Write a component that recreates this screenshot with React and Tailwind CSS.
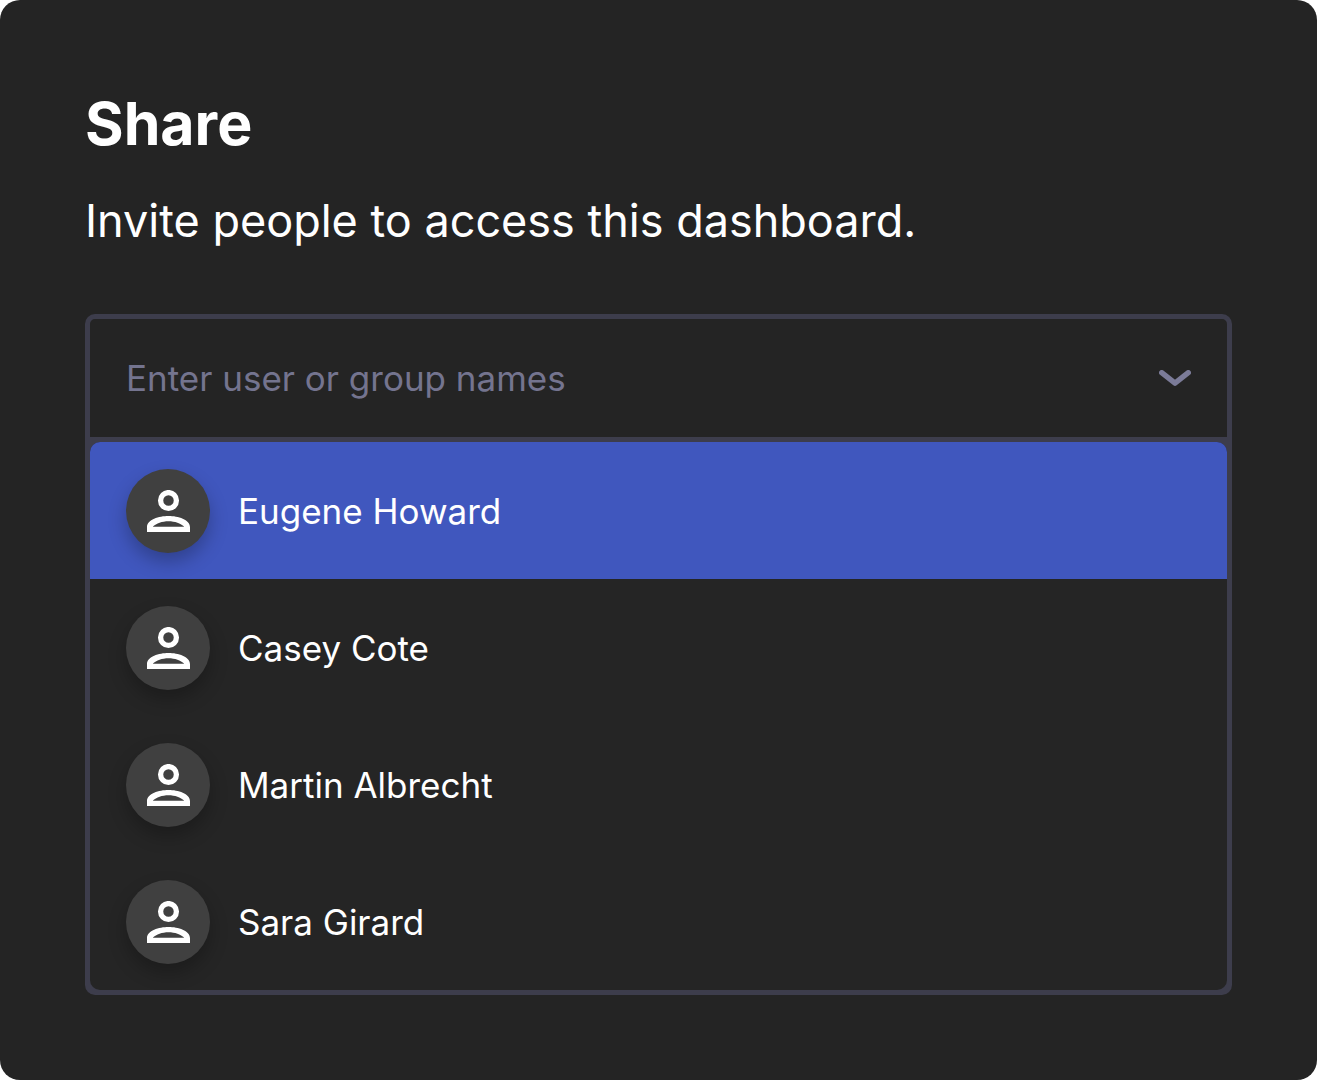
import { useState } from 'react';
import clsx from 'clsx';

const people = ['Eugene Howard', 'Casey Cote', 'Martin Albrecht', 'Sara Girard'];

function Avatar() {
  return (
    <span className="flex size-[84px] shrink-0 items-center justify-center rounded-full bg-[#404040] shadow-[0_9px_18px_rgba(0,0,0,0.25)]">
      <svg viewBox="0 0 43 42" className="h-[42px] w-[43px]" fill="none" aria-hidden="true">
        <circle cx="21.5" cy="10.5" r="7.9" stroke="white" strokeWidth="5.3" />
        <path
          fill="white"
          fillRule="evenodd"
          d="M0 42V37.2C0 29.5 12 26 21.5 26S43 29.5 43 37.2V42ZM5.7 36.7H37.3C33.5 33.5 28 31.3 21.5 31.3S9.5 33.5 5.7 36.7Z"
        />
      </svg>
    </span>
  );
}

export default function App() {
  const [query, setQuery] = useState('');
  const [open, setOpen] = useState(true);
  const [active, setActive] = useState(0);

  const matches = people.filter(name => name.toLowerCase().includes(query.toLowerCase()));

  const pick = (name) => {
    setQuery(name);
    setOpen(false);
  };

  return (
    <main className="min-h-screen rounded-[20px] bg-[#242424] p-[85px] font-['Inter',sans-serif] text-white">
      <h1 className="text-[59px] leading-[78px] font-bold">Share</h1>
      <p className="mt-[26px] text-[45px] leading-[64px]">Invite people to access this dashboard.</p>

      <div className="mt-[61px] rounded-[10px] border-5 border-[#3d3d4c]">
        <div className="flex h-[118px] items-center px-9">
          <input
            type="text"
            role="combobox"
            aria-label="Enter user or group names"
            aria-expanded={open}
            aria-controls="people-list"
            placeholder="Enter user or group names"
            className="min-w-0 flex-1 bg-transparent text-[35px] leading-[46px] outline-none placeholder:text-[#74748f]"
            value={query}
            onChange={(e) => {
              setQuery(e.target.value);
              setActive(0);
              setOpen(true);
            }}
          />
          <button type="button" aria-label="Toggle list" onClick={() => setOpen(!open)}>
            <svg viewBox="0 0 32 16" className="h-4 w-8" fill="none" aria-hidden="true">
              <path d="M2.7 2.7L16 13.2L29.3 2.7" stroke="#7b7b98" strokeWidth="5.4" strokeLinecap="round" strokeLinejoin="round" />
            </svg>
          </button>
        </div>

        {open && (
          <div className="border-t-5 border-[#3d3d4c] bg-[#3d3d4c]">
            <div id="people-list" role="listbox" aria-label="People" className="overflow-hidden rounded-[10px] bg-[#252525]">
              {matches.map((name, idx) => (
                <button
                  key={name}
                  type="button"
                  role="option"
                  aria-selected={idx === active}
                  onMouseEnter={() => setActive(idx)}
                  onClick={() => pick(name)}
                  className={clsx(
                    'flex h-[137px] w-full items-center gap-7 px-9 text-left text-[35px] leading-[46px]',
                    idx === active && 'bg-[#4057be]'
                  )}
                >
                  <Avatar />
                  {name}
                </button>
              ))}
            </div>
          </div>
        )}
      </div>
    </main>
  );
}
